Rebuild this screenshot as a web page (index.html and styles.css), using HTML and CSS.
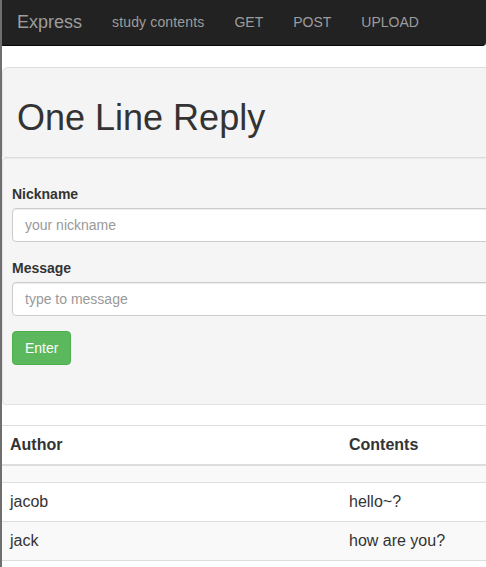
FILE: index.html
```html
<!DOCTYPE html>
<html lang="en">
<head>
<meta charset="utf-8">
<title>One Line Reply</title>
<link rel="stylesheet" href="styles.css">
</head>
<body>
<nav class="navbar">
  <a class="brand" href="#">Express</a>
  <ul class="nav">
    <li><a href="#">study contents</a></li>
    <li><a href="#">GET</a></li>
    <li><a href="#">POST</a></li>
    <li><a href="#">UPLOAD</a></li>
  </ul>
</nav>
<main class="page">
  <div class="jumbotron">
    <h1>One Line Reply</h1>
  </div>
  <form class="well">
    <div class="form-group">
      <label for="nick">Nickname</label>
      <input id="nick" class="form-control" type="text" placeholder="your nickname">
    </div>
    <div class="form-group">
      <label for="msg">Message</label>
      <input id="msg" class="form-control" type="text" placeholder="type to message">
    </div>
    <button type="button" class="btn">Enter</button>
  </form>
  <table class="table">
    <thead>
      <tr><th class="col-author">Author</th><th>Contents</th></tr>
    </thead>
    <tbody>
      <tr><td></td><td></td></tr>
      <tr><td>jacob</td><td>hello~?</td></tr>
      <tr><td>jack</td><td>how are you?</td></tr>
      <tr><td></td><td></td></tr>
    </tbody>
  </table>
</main>
</body>
</html>
```

FILE: styles.css
```css
html, body {
  margin: 0;
  padding: 0;
}
body {
  font-family: "Liberation Sans", Arial, sans-serif;
  font-size: 16px;
  line-height: 1.428571;
  color: #333;
  background: #fff;
  border-left: 2px solid #6f6f6f;
  min-height: 567px;
  overflow: hidden;
  box-sizing: border-box;
}
.navbar {
  display: flex;
  align-items: center;
  height: 45px;
  background: #222;
  border-bottom: 1px solid #080808;
  margin-left: -2px;
  border-radius: 0 0 4px 4px;
  padding-left: 2px;
}
.brand {
  font-size: 18px;
  line-height: 20px;
  color: #9d9d9d;
  text-decoration: none;
  padding: 0 15px;
  margin-top: -2px;
}
.nav {
  display: flex;
  list-style: none;
  margin: 0;
  padding: 0;
}
.nav a {
  display: block;
  font-size: 14px;
  line-height: 20px;
  color: #9d9d9d;
  text-decoration: none;
  padding: 0 15px;
  margin-top: -1px;
}
.nav li:first-child a {
  letter-spacing: 0.15px;
}
.page {
  width: 640px;
  margin-top: 21px;
}
.jumbotron {
  background: #f4f4f4;
  border: 1px solid #e3e3e3;
  border-top-color: #ddd;
  border-bottom: 0;
  border-radius: 6px 0 0 0;
  padding: 30px 14px 19px;
}
.jumbotron h1 {
  margin: 0;
  font-size: 36px;
  font-weight: 500;
  line-height: 40px;
  color: #333;
}
.well {
  background: #f5f5f5;
  border: 1px solid #e3e3e3;
  border-top-color: #dcdcdc;
  border-radius: 4px;
  box-shadow: inset 0 1px 1px rgba(0, 0, 0, .05);
  padding: 26px 9px 39px;
  margin: 0 0 20px;
}
.form-group {
  margin-bottom: 15px;
}
.form-group:first-child {
  margin-bottom: 16px;
}
.form-group label {
  display: block;
  font-size: 14px;
  line-height: 20px;
  font-weight: bold;
  margin-bottom: 4px;
}
.form-control {
  display: block;
  width: 100%;
  height: 34px;
  box-sizing: border-box;
  padding: 6px 12px;
  font-family: inherit;
  font-size: 14px;
  line-height: 20px;
  color: #555;
  background: #fff;
  border: 1px solid #ccc;
  border-radius: 4px;
  box-shadow: inset 0 1px 1px rgba(0, 0, 0, .075);
}
.form-control::placeholder {
  color: #999;
}
.btn {
  display: block;
  height: 34px;
  box-sizing: border-box;
  padding: 6px 12px;
  font-family: inherit;
  font-size: 14px;
  line-height: 20px;
  color: #fff;
  background: #5cb85c;
  border: 1px solid #4cae4c;
  border-radius: 4px;
  cursor: pointer;
}
.table {
  width: 100%;
  border-collapse: collapse;
  border-spacing: 0;
}
.table th,
.table td {
  padding: 8px;
  line-height: 22px;
  text-align: left;
  vertical-align: top;
  border-top: 1px solid #ddd;
}
.table th {
  font-weight: bold;
  border-bottom: 2px solid #ddd;
  vertical-align: bottom;
}
.table tbody tr:first-child td,
.table tbody tr:last-child td {
  line-height: 0;
  height: 0;
}
.table .col-author {
  width: 323px;
}
.table tbody tr:nth-child(odd) {
  background: #f9f9f9;
}
```
